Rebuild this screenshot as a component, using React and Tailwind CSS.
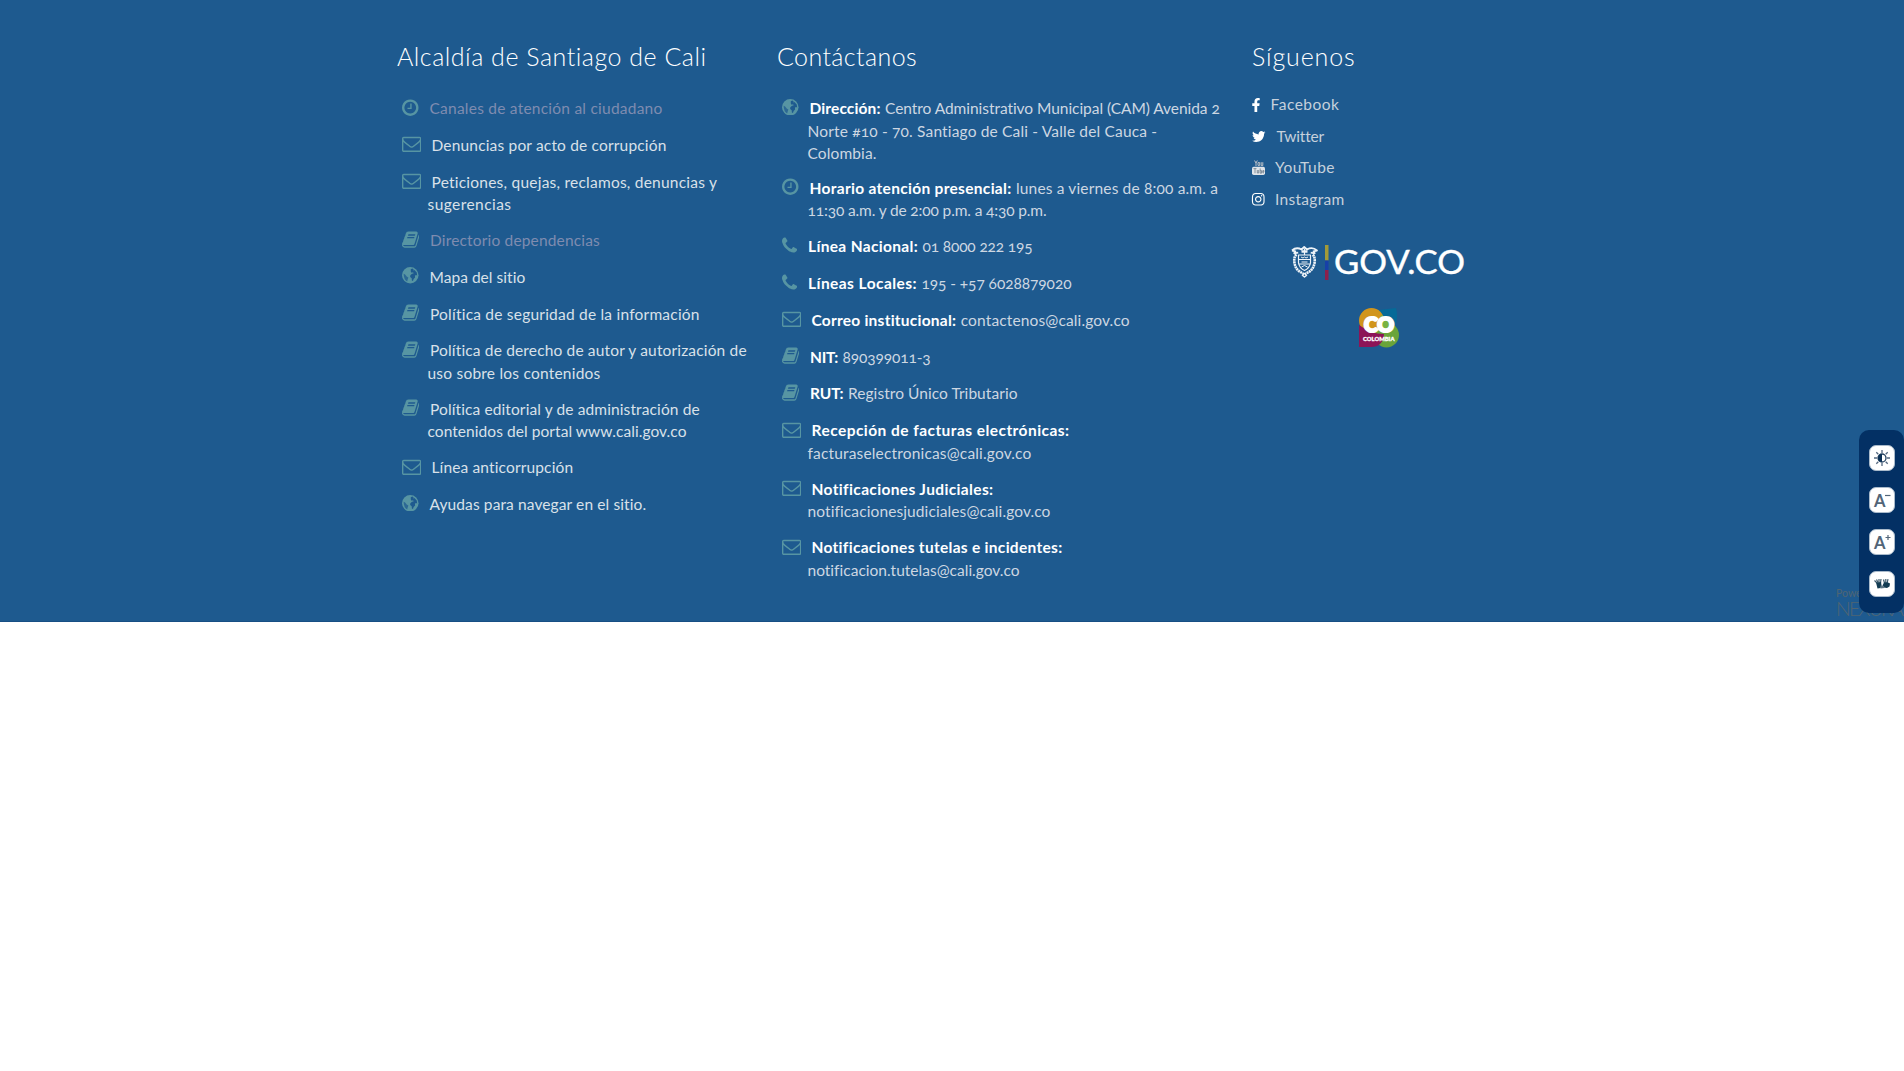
import React, { useLayoutEffect, useRef } from 'react';
import { FaFacebookF, FaInstagram } from 'react-icons/fa';

const glyphs = {
  clock: {
    box: '128 0 1536 1792',
    size: 'w-[16.5px]',
    gap: 'ml-[2px]',
    d: 'M1024 544v448q0 14-9 23t-23 9h-320q-14 0-23-9t-9-23v-64q0-14 9-23t23-9h224v-352q0-14 9-23t23-9h64q14 0 23 9t9 23zm416 352q0-148-73-273t-198-198-273-73-273 73-198 198-73 273 73 273 198 198 273 73 273-73 198-198 73-273zm224 0q0 209-103 385.5t-279.5 279.5-385.5 103-385.5-103-279.5-279.5-103-385.5 103-385.5 279.5-279.5 385.5-103 385.5 103 279.5 279.5 103 385.5z',
  },
  mail: {
    box: '0 0 1792 1792',
    size: 'w-[19.3px]',
    gap: 'ml-[4px]',
    d: 'M1664 1504v-768q-32 36-69 66-268 206-426 338-51 43-83 67t-86.5 48.5-102.5 24.5h-2q-48 0-102.5-24.5t-86.5-48.5-83-67q-158-132-426-338-37-30-69-66v768q0 13 9.5 22.5t22.5 9.5h1472q13 0 22.5-9.5t9.5-22.5zm0-1051v-24.5l-.5-13-3-12.5-5.5-9-9-7.5-14-2.5h-1472q-13 0-22.5 9.5t-9.5 22.5q0 168 147 284 193 152 401 317 6 5 35 29.5t46 37.5 44.5 31.5 50.5 27.5 43 9h2q20 0 43-9t50.5-27.5 44.5-31.5 46-37.5 35-29.5q208-165 401-317 54-43 100.5-115.5t46.5-131.5zm128-37v1088q0 66-47 113t-113 47h-1472q-66 0-113-47t-47-113v-1088q0-66 47-113t113-47h1472q66 0 113 47t47 113z',
  },
  phone: {
    box: '192 0 1408 1792',
    size: 'w-[15.1px]',
    gap: 'ml-[0.5px]',
    d: 'M1600 1240q0 27-10 70.5t-21 68.5q-21 50-122 106-94 51-186 51-27 0-53-3.5t-57.5-12.5-47-14.5-55.5-20.5-49-18q-98-35-175-83-127-79-264-216t-216-264q-48-77-83-175-3-9-18-49t-20.5-55.5-14.5-47-12.5-57.5-3.5-53q0-92 51-186 56-101 106-122 25-11 68.5-21t70.5-10q14 0 21 3 18 6 53 76 11 19 30 54t35 63.5 31 53.5q3 4 17.5 25t21.5 35.5 7 28.5q0 20-28.5 50t-62 55-62 53-28.5 46q0 9 5 22.5t8.5 20.5 14 24 11.5 19q76 137 174 235t235 174q2 1 19 11.5t24 14 20.5 8.5 22.5 5q18 0 46-28.5t53-62 55-62 50-28.5q14 0 28.5 7t35.5 21.5 25 17.5q25 15 53.5 31t63.5 35 54 30q70 35 76 53 3 7 3 21z',
  },
  book: {
    box: '64 0 1664 1792',
    size: 'w-[17.4px]',
    gap: 'ml-[2.5px]',
    d: 'M1703 478q40 57 18 129l-275 906q-19 64-76.5 107.5t-122.5 43.5h-923q-77 0-148.5-53.5t-99.5-131.5q-24-67-2-127 0-4 3-27t4-37q1-8-3-21.5t-3-19.5q2-11 8-21t16.5-23.5 16.5-23.5q23-38 45-91.5t30-91.5q3-10 .5-30t-.5-28q3-11 17-28t17-23q21-36 42-92t25-90q1-9-2.5-32t.5-28q4-13 22-30.5t22-22.5q19-26 42.5-84.5t27.5-96.5q1-8-3-25.5t-2-26.5q2-8 9-18t18-23 17-21q8-12 16.5-30.5t15-35 16-36 19.5-32 26.5-23.5 36-11.5 47.5 5.5l-1 3q38-9 51-9h761q74 0 114 56t18 130l-274 906q-36 119-71.5 153.5t-128.5 34.5h-869q-27 0-38 15-11 16-1 43 24 70 144 70h923q29 0 56-15.5t35-41.5l300-987q7-22 5-57 38 15 59 43zm-1064 2q-4 13 2 22.5t20 9.5h608q13 0 25.5-9.5t16.5-22.5l21-64q4-13-2-22.5t-20-9.5h-608q-13 0-25.5 9.5t-16.5 22.5zm-83 256q-4 13 2 22.5t20 9.5h608q13 0 25.5-9.5t16.5-22.5l21-64q4-13-2-22.5t-20-9.5h-608q-13 0-25.5 9.5t-16.5 22.5z',
  },
};

const twitterPath =
  'M1684 408q-67 98-162 167 1 14 1 42 0 130-38 259.5t-115.5 248.5-184.5 210.5-258 146-323 54.5q-271 0-496-145 35 4 78 4 225 0 401-138-105-2-188-64.5t-114-159.5q33 5 61 5 43 0 85-11-112-23-185.5-111.5t-73.5-205.5v-4q68 38 146 41-66-44-105-115t-39-154q0-88 44-163 121 149 294.5 238.5t371.5 99.5q-8-38-8-74 0-134 94.5-228.5t228.5-94.5q140 0 236 102 109-21 205-78-37 115-142 178 93-10 186-50z';

/* A run of text whose tracking is adjusted so that it fills the given width. */
function Run({ w, children, className = '' }) {
  const ref = useRef(null);
  useLayoutEffect(() => {
    const el = ref.current;
    el.style.letterSpacing = '0px';
    const natural = el.getBoundingClientRect().width;
    el.style.letterSpacing = `${(w - natural) / children.length}px`;
  }, [w, children]);
  return (
    <span ref={ref} className={`inline-block whitespace-nowrap ${className}`}>
      {children}
    </span>
  );
}

function GlobeIcon() {
  return (
    <svg viewBox="0 0 16 16" className="mt-[1.500px] size-[16.500px]">
      <circle cx="8" cy="8" r="8" fill="currentColor" />
      <path
        d="M8.500 2.200 10 1.500l1.300.6-.6 1.200 1.300-.4 2.300 2.500.4 2.800-1.200-.4-1 .6.2 1.700-1.400 1.600-.7 1.900-1-.5-.2-2.200-1.500-1.200.2-1.700 1.600-1.400 1.500-.2-.4-1.300-1.500.5-.8-1.300z"
        fill="#1e5a8f"
      />
      <path d="M1.600 6.500 3 7.200l1.800 2.300 1.400.7-.6 1.600-.6 2.200q-3.400-2-3.400-7.500z" fill="#1e5a8f" opacity=".75" />
    </svg>
  );
}

function ListIcon({ name }) {
  if (name === 'globe') return <GlobeIcon />;
  const g = glyphs[name];
  return (
    <svg viewBox={g.box} className={`mt-[0.500px] h-[19.3px] ${g.size}`} fill="currentColor">
      <path d={g.d} />
    </svg>
  );
}

/* lines: each line is a list of [text, width, bold?] */
function Item({ icon, lines, muted, light }) {
  const gap = icon === 'globe' ? 'ml-[2px]' : glyphs[icon].gap;
  const height = { 1: 'h-[36.75px]', 2: 'h-[58.5px]', 3: 'h-[79.75px]' }[lines.length];
  const tone = muted ? 'text-[#7f8cb0]' : light ? 'text-[#cdd7e2]' : 'text-[#d9e1e9]';
  return (
    <li className={`flex ${height}`}>
      <span className="w-[25.5px] shrink-0 text-[#5795a3]">
        <ListIcon name={icon} />
      </span>
      <div className={tone}>
        {lines.map((line, i) => (
          <div key={i} className={`flex h-[22.5px] items-start gap-[4.5px] ${i === 0 ? gap : ''}`}>
            {line.map(([text, w, bold]) => (
              <Run key={text} w={w} className={bold ? 'font-bold text-white' : ''}>
                {text}
              </Run>
            ))}
          </div>
        ))}
      </div>
    </li>
  );
}

const cityLinks = [
  { icon: 'clock', muted: true, lines: [[['Canales de atención al ciudadano', 233]]] },
  { icon: 'mail', lines: [[['Denuncias por acto de corrupción', 235]]] },
  { icon: 'mail', lines: [[['Peticiones, quejas, reclamos, denuncias y', 286]], [['sugerencias', 84]]] },
  { icon: 'book', muted: true, lines: [[['Directorio dependencias', 170]]] },
  { icon: 'globe', lines: [[['Mapa del sitio', 96]]] },
  { icon: 'book', lines: [[['Política de seguridad de la información', 270]]] },
  { icon: 'book', lines: [[['Política de derecho de autor y autorización de', 317]], [['uso sobre los contenidos', 173]]] },
  { icon: 'book', lines: [[['Política editorial y de administración de', 270]], [['contenidos del portal www.cali.gov.co', 259]]] },
  { icon: 'mail', lines: [[['Línea anticorrupción', 142]]] },
  { icon: 'globe', lines: [[['Ayudas para navegar en el sitio.', 217]]] },
];

const contactRows = [
  {
    icon: 'globe',
    lines: [
      [['Dirección:', 71, true], ['Centro Administrativo Municipal (CAM) Avenida 2', 335]],
      [['Norte #10 - 70. Santiago de Cali - Valle del Cauca -', 350]],
      [['Colombia.', 69]],
    ],
  },
  {
    icon: 'clock',
    lines: [
      [['Horario atención presencial:', 202, true], ['lunes a viernes de 8:00 a.m. a', 202]],
      [['11:30 a.m. y de 2:00 p.m. a 4:30 p.m.', 239]],
    ],
  },
  { icon: 'phone', lines: [[['Línea Nacional:', 110, true], ['01 8000 222 195', 110]]] },
  { icon: 'phone', lines: [[['Líneas Locales:', 109, true], ['195 - +57 6028879020', 150]]] },
  { icon: 'mail', lines: [[['Correo institucional:', 145, true], ['contactenos@cali.gov.co', 169]]] },
  { icon: 'book', lines: [[['NIT:', 28, true], ['890399011-3', 88]]] },
  { icon: 'book', lines: [[['RUT:', 33.5, true], ['Registro Único Tributario', 169.5]]] },
  { icon: 'mail', lines: [[['Recepción de facturas electrónicas:', 258, true]], [['facturaselectronicas@cali.gov.co', 224]]] },
  { icon: 'mail', lines: [[['Notificaciones Judiciales:', 182, true]], [['notificacionesjudiciales@cali.gov.co', 243]]] },
  { icon: 'mail', lines: [[['Notificaciones tutelas e incidentes:', 251, true]], [['notificacion.tutelas@cali.gov.co', 212]]] },
];

function Column({ title, width, items, className, light }) {
  return (
    <section className={className}>
      <h2 className="h-[59px] text-[25px] leading-[36px] font-light text-white">
        <Run w={width}>{title}</Run>
      </h2>
      <ul className="pl-[5px] text-[15.500px] leading-[22.5px]">
        {items.map((item, i) => (
          <Item key={i} light={light} {...item} />
        ))}
      </ul>
    </section>
  );
}

function YouTubeIcon() {
  return (
    <svg viewBox="0 0 13 15" className="h-[15px] w-[13px]" fill="none">
      <path d="M2.6.5 4 3.2 5.3.5M4 3.2V6M6 2.6v2.8h1.7V2.6zM9.2 2.2v3.3h1.6V2.2" stroke="#b9bfc6" strokeWidth="1" />
      <rect x="0" y="6.8" width="13" height="8.2" rx="1.7" fill="#dfe4e9" />
      <path d="M1.5 8.6h3M3 8.6v4.6M5.3 10v3h1.4v-3M8.2 8.4v4.8h1.3v-2.6H8.2M12 12.8h-1.2v-2.2H12v1.1h-1.2" stroke="#6f7d8c" strokeWidth=".8" />
    </svg>
  );
}

const socials = [
  { name: 'Facebook', w: 69, box: 'w-[18.5px]', icon: <FaFacebookF className="ml-[-1px] h-[14px] w-[10px]" /> },
  {
    name: 'Twitter',
    w: 47,
    box: 'w-[24.5px]',
    icon: (
      <svg viewBox="108 128 1576 1536" className="h-[13px] w-[13.5px]" fill="currentColor">
        <path d={twitterPath} />
      </svg>
    ),
  },
  { name: 'YouTube', w: 60, box: 'w-[23px]', icon: <YouTubeIcon /> },
  { name: 'Instagram', w: 69.5, box: 'w-[23px]', icon: <FaInstagram className="ml-[-1px] size-[14.5px]" /> },
];

function GovLogo() {
  return (
    <svg viewBox="0 0 176 36" className="h-[36px] w-[176px]">
      <g fill="none" stroke="#eef3f8" strokeLinejoin="round">
        <path d="M1 5.5c3-2.7 6.5-2.7 9.5-1L13.2 2l2.800 2.500c3-1.700 7-1.700 10 1l-3.500.8 1.200 2-4-.6M1 5.500l3.400.8-1.200 2 4-.6" strokeWidth="1.800" />
        <path d="M5.500 9.500Q2.500 12 3.500 18q1 6 5.500 8.800l4.500 2.700 4.500-2.700q4.500-2.800 5.500-8.800 1-6-2-8.500" strokeWidth="2.600" strokeDasharray="2 .5" />
        <path d="M7.500 10h12v8q-.8 5-6 7.500-5.200-2.500-6-7.500zM8 14.500h11M8.300 19h10.400M13.500 4v6" strokeWidth="1.200" />
        <path d="m10 12 2 1 1.500-1 1.500 1 2-1M10.500 17h6M10.500 22l3-1.500 3 1.500" strokeWidth="1" />
        <path d="m11 30 2.500 2 2.500-2" strokeWidth="1.500" />
        <path d="M10.500 6.500h6" strokeWidth="2.500" />
      </g>
      <rect x="34" y="0" width="3.500" height="15.500" fill="#a29a38" />
      <rect x="34" y="15.500" width="3.500" height="9.500" fill="#1740a8" />
      <rect x="34" y="25" width="3.500" height="10" fill="#8b1f4c" />
      <text x="43" y="29" textLength="131" lengthAdjust="spacingAndGlyphs" fill="#fff" stroke="#fff" strokeWidth=".4" fontFamily="Lato" fontSize="33">
        GOV.CO
      </text>
    </svg>
  );
}

function ColombiaLogo() {
  return (
    <svg viewBox="0 0 40 40" className="size-[40px]">
      <path d="M20 2 37 0q2.500 9-1 19L24 20z" fill="#066a98" />
      <circle cx="27.500" cy="27" r="12.500" fill="#6aa43a" />
      <circle cx="12.500" cy="12.500" r="12.500" fill="#d1951c" />
      <path d="M0 17q12 9 25 9-1 13-13 13H0z" fill="#8d1457" />
      <path d="M22 7q8 2 10 10l-5 8-9-3z" fill="#79b343" />
      <text x="5" y="24" textLength="30" lengthAdjust="spacingAndGlyphs" fill="#fff" stroke="#fff" strokeWidth="2.200" fontFamily="Lato" fontWeight="900" fontSize="20">
        CO
      </text>
      <text x="4" y="32.500" textLength="31.500" lengthAdjust="spacingAndGlyphs" fill="#fff" stroke="#fff" strokeWidth=".3" fontFamily="Lato" fontWeight="900" fontSize="6">
        COLOMBIA
      </text>
    </svg>
  );
}

function ContrastIcon() {
  return (
    <svg viewBox="0 0 18 18" className="size-[18px]">
      <path d="M9 1v3M9 14v3M1 9h3M14 9h3M3.300 3.300l2 2M12.700 12.700l2 2M3.300 14.700l2-2M12.700 5.300l2-2" stroke="#53677f" strokeWidth="1.300" />
      <circle cx="9" cy="9" r="4" fill="#fff" stroke="#24415f" strokeWidth="1.300" />
      <path d="M9 5a4 4 0 0 0 0 8z" fill="#092f55" />
    </svg>
  );
}

function LetterIcon({ plus }) {
  return (
    <svg viewBox="0 0 20 18" className="h-[18px] w-[20px]">
      <text x="2" y="15.500" fill="#526578" fontFamily="Lato" fontSize="16.500" fontWeight="700">
        A
      </text>
      <path d={plus ? 'M13.500 4.500h5M16 2v5' : 'M13 4.500h5.500'} stroke="#526578" strokeWidth="1.200" />
    </svg>
  );
}

function SignLanguageIcon() {
  return (
    <svg viewBox="0 0 18 16" className="h-[16px] w-[18px]">
      <path d="M1.500 4.500 4 7M3.500 3.500 5 6.500M6 3v3.500M8 3 7.500 7M10.500 3.500l1 3.500M12.800 3v4M15 3.200 14.200 7" stroke="#3d5a6c" strokeWidth="1.200" fill="none" />
      <path d="M3 6.500 8 6l.5 3.500L7.500 12l-3 .5z" fill="#123b52" />
      <path d="m11 6.500 3.500-.3 2.500 1.300-.5 3-2.500 1.500-3-.5-1.500-2z" fill="#123b52" />
      <path d="m7.500 9.500 3.500.5.500 2-4 .5z" fill="#5b7484" />
    </svg>
  );
}

const tools = [
  <ContrastIcon key="contrast" />,
  <LetterIcon key="smaller" />,
  <LetterIcon key="larger" plus />,
  <SignLanguageIcon key="signs" />,
];

export default function App() {
  return (
    <main className="relative min-h-[1071px] bg-white font-[Lato,sans-serif] oldstyle-nums">
      <footer className="h-[622px] border-b border-[#174f84] bg-[#1e5a8f] pt-[38px] pl-[397px]">
        <div className="flex">
          <Column title="Alcaldía de Santiago de Cali" width={310} items={cityLinks} className="w-[380px]" />
          <Column title="Contáctanos" width={140} items={contactRows} light className="w-[475px]" />
          <section className="w-[260px]">
            <h2 className="h-[51px] text-[25px] leading-[36px] font-light text-white">
              <Run w={103.5}>Síguenos</Run>
            </h2>
            <ul className="text-[15.500px] leading-[31.600px] text-[#c6d1dc]">
              {socials.map((s) => (
                <li key={s.name} className="flex h-[31.600px] items-center">
                  <span className={`shrink-0 text-white ${s.box}`}>{s.icon}</span>
                  <Run w={s.w}>{s.name}</Run>
                </li>
              ))}
            </ul>
            <div className="mt-[29.500px] flex flex-col items-start">
              <div className="ml-[39px]">
                <GovLogo />
              </div>
              <div className="mt-[27px] ml-[107px]">
                <ColombiaLogo />
              </div>
            </div>
          </section>
        </div>
      </footer>
      <div className="absolute top-[586px] left-[1836px] w-[68px] whitespace-nowrap text-[#4f6573]">
        <div className="text-[10.500px] leading-[14px]">Powered by</div>
        <div className="text-[19.500px] leading-[18px] font-light">
          <Run w={66}>NEXURA</Run>
        </div>
      </div>
      <aside className="absolute top-[430px] right-0 flex h-[183px] w-[45px] flex-col items-center gap-[15.900px] rounded-[10px] bg-[#033064] pt-[15px]">
        {tools.map((icon) => (
          <button key={icon.key} className="flex size-[26px] shrink-0 items-center justify-center rounded-[7px] border border-[#a9bacb] bg-white">
            {icon}
          </button>
        ))}
      </aside>
    </main>
  );
}
